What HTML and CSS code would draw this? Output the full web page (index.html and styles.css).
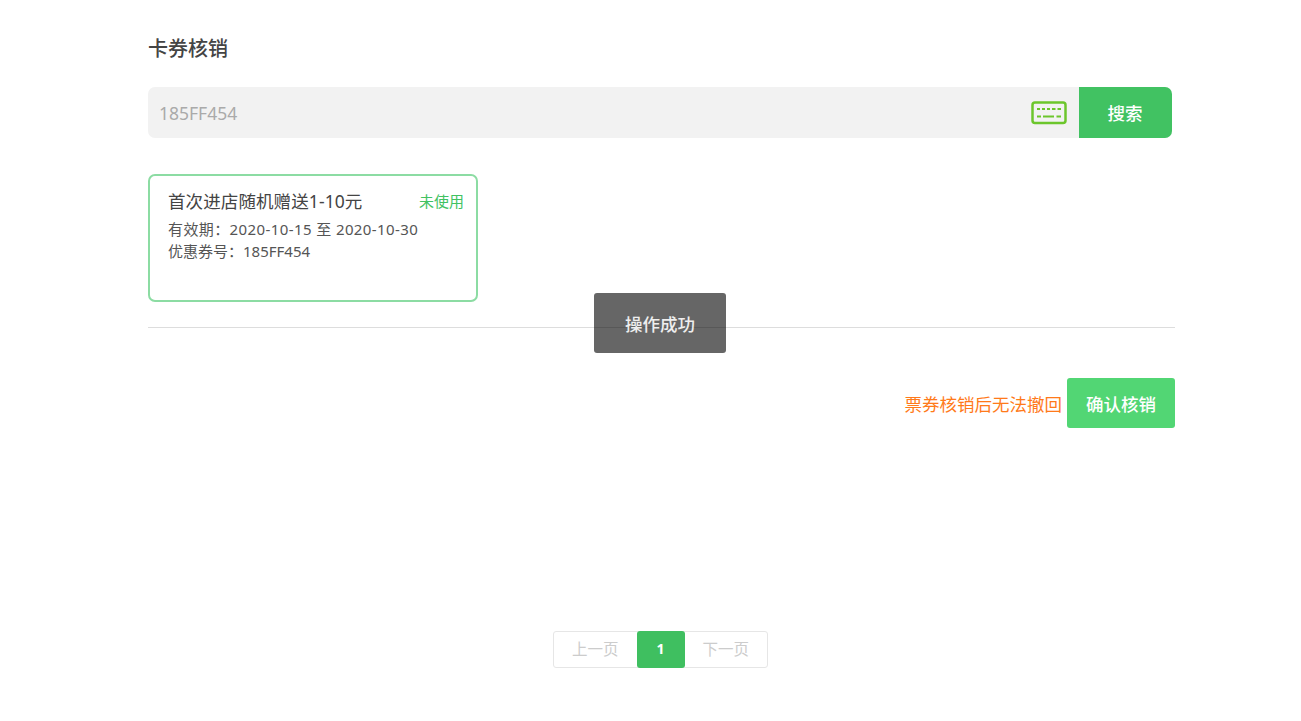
FILE: index.html
```html
<!DOCTYPE html>
<html lang="zh-CN">
<head>
<meta charset="utf-8">
<title>卡券核销</title>
<link rel="stylesheet" href="styles.css">
</head>
<body>
<main class="page">
  <h1 class="title">卡券核销</h1>
  <div class="search">
    <div class="search-input">
      <span class="search-value">185FF454</span>
      <svg class="kbd" width="36" height="24" viewBox="0 0 36 24" aria-hidden="true">
        <rect x="1.500" y="1.500" width="33" height="20.500" rx="2.500" fill="none" stroke="#6cc62c" stroke-width="2.500"/>
        <path d="M6 8h3M11 8h3M16 8h3M21 8h3.500M26.500 8h3.500M6 15.500h4M12 15.500h11M25.500 15.500h4.500" fill="none" stroke="#6cc62c" stroke-width="2"/>
      </svg>
    </div>
    <button class="search-btn">搜索</button>
  </div>
  <section class="card">
    <div class="card-head">
      <span class="card-name">首次进店随机赠送1-10元</span>
      <span class="card-status">未使用</span>
    </div>
    <p class="card-line card-date">有效期：2020-10-15 至 2020-10-30</p>
    <p class="card-line">优惠券号：185FF454</p>
  </section>
  <hr class="divider">
  <div class="confirm">
    <span class="warn">票券核销后无法撤回</span>
    <button class="confirm-btn">确认核销</button>
  </div>
  <nav class="pager">
    <span class="pager-item">上一页</span>
    <span class="pager-item current">1</span>
    <span class="pager-item">下一页</span>
  </nav>
</main>
<div class="toast">操作成功</div>
</body>
</html>
```
FILE: styles.css
```css
* { box-sizing: border-box; }
html, body { margin: 0; height: 100%; }
body {
  background: #fff;
  font-family: "Noto Sans", "Noto Sans CJK SC", sans-serif;
  color: #333;
  overflow: hidden;
}
.page {
  width: 1027px;
  margin-left: 148px;
  padding-top: 36px;
}
.title {
  margin: 0;
  height: 26px;
  font-size: 20px;
  line-height: 26px;
  font-weight: 500;
  color: #444;
}
.search {
  display: flex;
  width: 1023.500px;
  height: 51px;
  margin-top: 25px;
  border-radius: 7px;
  overflow: hidden;
  background: #f2f2f2;
}
.search-input {
  flex: 1;
  display: flex;
  align-items: center;
  justify-content: space-between;
  padding: 0 12px 0 11px;
}
.search-value { font-size: 17.500px; color: #aaa; }
.kbd { display: block; }
.search-btn {
  width: 93px;
  border: 0;
  padding: 0;
  background: #41c262;
  color: #fff;
  font: inherit;
  font-size: 17.500px;
  font-weight: 500;
}
.card {
  width: 330px;
  height: 128px;
  margin-top: 36px;
  padding: 12px 12px 0 18px;
  border: 2px solid #8cdca3;
  border-radius: 7px;
}
.card-head {
  display: flex;
  justify-content: space-between;
  align-items: center;
  height: 24px;
}
.card-name { font-size: 17.500px; letter-spacing: .1px; color: #444; }
.card-status { font-size: 15px; color: #41c262; }
.card-line {
  margin: 0;
  font-size: 15px;
  line-height: 22px;
  color: #555;
}
.card-date { letter-spacing: .4px; }
.card-head + .card-line { margin-top: 6px; }
.divider {
  margin: 25px 0 0;
  border: 0;
  border-top: 1px solid #ddd;
}
.confirm {
  display: flex;
  justify-content: flex-end;
  align-items: center;
  gap: 5px;
  margin-top: 50px;
}
.warn { font-size: 17.500px; color: #ff7a1a; }
.confirm-btn {
  width: 108px;
  height: 50px;
  border: 0;
  padding: 0;
  border-radius: 3px;
  background: #52d674;
  color: #fff;
  font: inherit;
  font-size: 17.500px;
  font-weight: 500;
}
.pager {
  display: flex;
  width: 215px;
  height: 37px;
  margin: 202.500px 0 0 405px;
  border: 1px solid #e6e6e6;
  border-radius: 3px;
}
.pager-item {
  flex: 1;
  display: flex;
  align-items: center;
  justify-content: center;
  padding-bottom: 2px;
  font-size: 15.500px;
  color: #ccc;
}
.pager-item.current {
  flex: 0 0 48px;
  margin: -1px 0;
  border-radius: 3px;
  background: #3fbf60;
  color: #fff;
  font-weight: 700;
  font-size: 14px;
}
.toast {
  position: absolute;
  left: 594px;
  top: 293px;
  width: 132px;
  height: 60px;
  display: flex;
  align-items: center;
  justify-content: center;
  border-radius: 3px;
  background: rgba(0, 0, 0, .6);
  color: #eee;
  font-size: 17.500px;
  font-weight: 500;
}
```
